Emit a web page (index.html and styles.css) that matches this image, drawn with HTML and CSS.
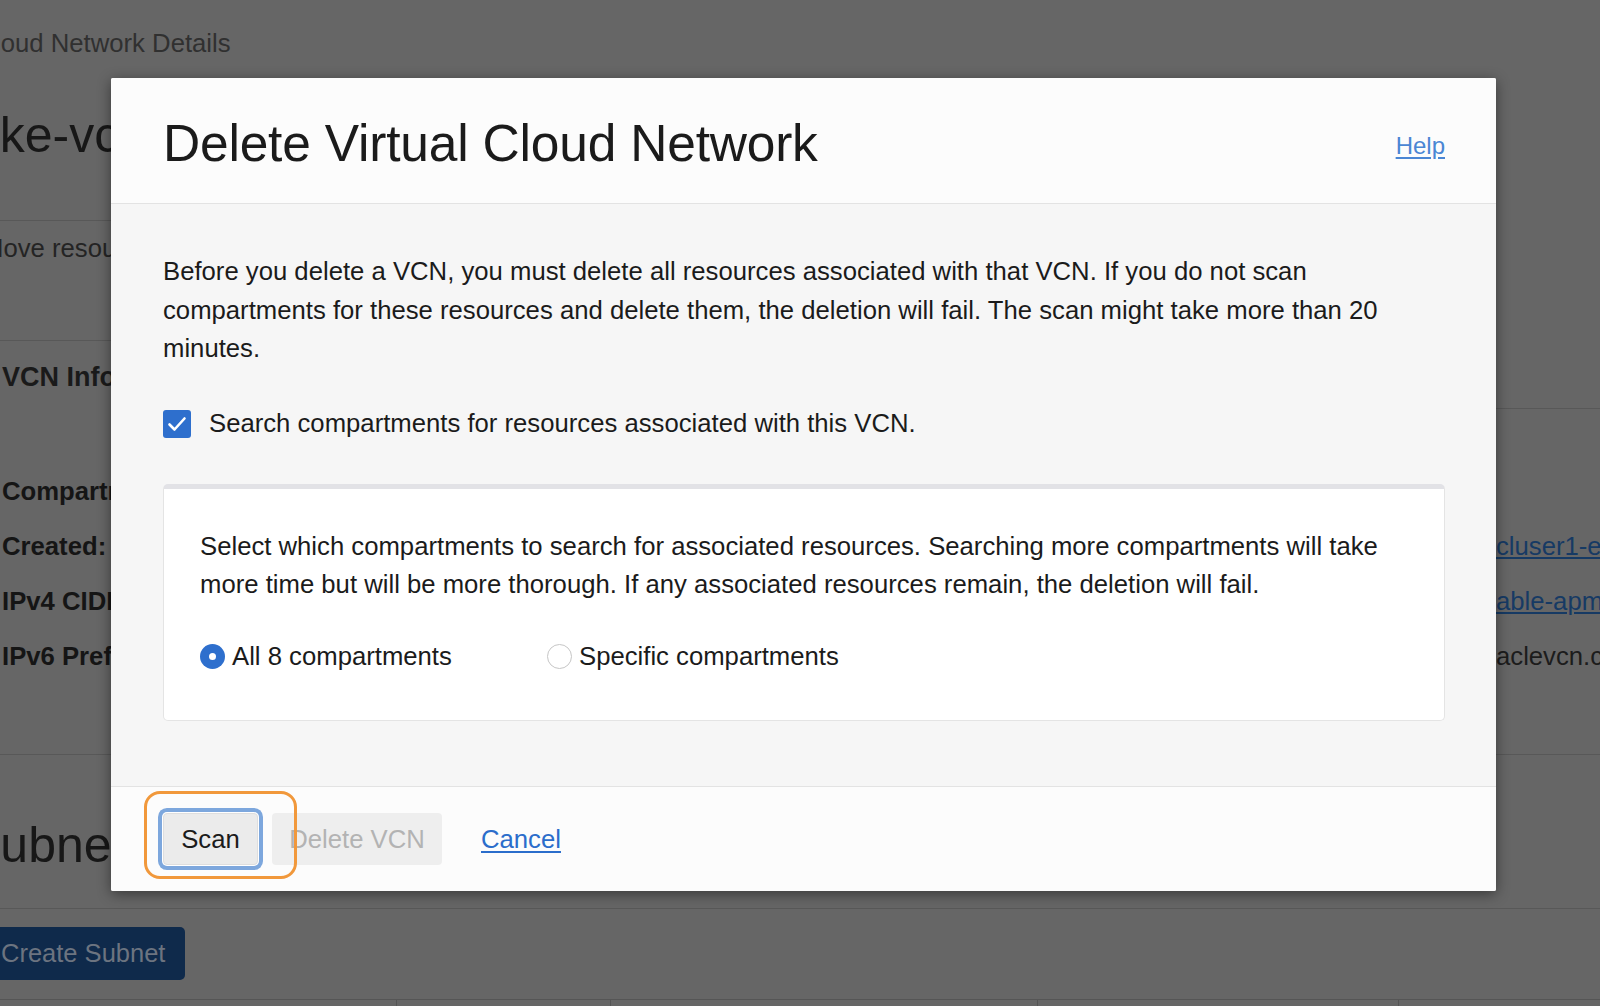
FILE: index.html
```html
<!DOCTYPE html>
<html lang="en">
<head>
<meta charset="utf-8">
<title>Delete Virtual Cloud Network</title>
<link rel="stylesheet" href="styles.css">
</head>
<body>
<div class="page">
  <div class="head-block">
    <div class="crumb">Virtual Cloud Network Details</div>
    <h1 class="vcn-title">oke-vcn-quick-cluser1</h1>
  </div>
  <div class="actions"><span class="action">Move resources</span></div>
  <section class="info">
    <div class="info-left">
      <h2 class="info-title">VCN Information</h2>
      <div class="rows">
        <div class="row"><span class="label">Compartment:</span></div>
        <div class="row"><span class="label">Created:</span></div>
        <div class="row"><span class="label">IPv4 CIDR Blocks:</span></div>
        <div class="row"><span class="label">IPv6 Prefixes:</span></div>
      </div>
    </div>
    <div class="info-right">
      <div class="row"></div>
      <div class="row"><a class="bg-link">cluser1-e6a8c1f2</a></div>
      <div class="row"><a class="bg-link">able-apm-vcn</a></div>
      <div class="row"><span class="bg-text">aclevcn.com</span></div>
    </div>
  </section>
  <section class="subnets">
    <div class="subnets-head"><h2 class="big-title">Subnets</h2></div>
    <div class="toolbar"><span class="create-btn">Create Subnet</span></div>
    <div class="table-head">
      <div class="th"></div><div class="th"></div><div class="th"></div><div class="th"></div><div class="th"></div>
    </div>
  </section>
</div>

<div class="modal" role="dialog" aria-labelledby="dlg-title">
  <header class="modal-header">
    <h2 id="dlg-title" class="modal-title">Delete Virtual Cloud Network</h2>
    <a class="help-link" href="#">Help</a>
  </header>
  <div class="modal-body">
    <p class="intro">Before you delete a VCN, you must delete all resources associated with that VCN. If you do not scan compartments for these resources and delete them, the deletion will fail. The scan might take more than 20 minutes.</p>
    <label class="check-row">
      <span class="checkbox"><svg width="28" height="28" viewBox="0 0 28 28"><polyline points="6.5,14.5 11.5,19.5 21.5,8.5" fill="none" stroke="#fff" stroke-width="2.6" stroke-linecap="round" stroke-linejoin="round"/></svg></span>
      <span>Search compartments for resources associated with this VCN.</span>
    </label>
    <div class="scope-box">
      <p class="scope-text">Select which compartments to search for associated resources. Searching more compartments will take more time but will be more thorough. If any associated resources remain, the deletion will fail.</p>
      <div class="radio-row">
        <label class="radio-option"><span class="radio checked"></span><span>All 8 compartments</span></label>
        <label class="radio-option"><span class="radio"></span><span>Specific compartments</span></label>
      </div>
    </div>
  </div>
  <footer class="modal-footer">
    <button class="btn btn-scan">Scan</button>
    <button class="btn btn-disabled" disabled>Delete VCN</button>
    <a class="cancel-link" href="#">Cancel</a>
  </footer>
</div>
<div class="highlight"></div>
</body>
</html>
```

FILE: styles.css
```css
html, body {
  margin: 0;
  padding: 0;
}
body {
  width: 1600px;
  height: 1006px;
  overflow: hidden;
  background: #666666;
  font-family: "Liberation Sans", Arial, sans-serif;
  position: relative;
}

/* ---------- dimmed background page ---------- */
.page {
  padding-top: 28px;
}
.head-block {
  width: 1300px;
  border-bottom: 1px solid #585858;
  padding-bottom: 55px;
}
.crumb {
  font-size: 25.7px;
  line-height: 30px;
  margin-left: -103px;
  color: #303030;
  white-space: nowrap;
}
.vcn-title {
  font-size: 50px;
  line-height: 60px;
  font-weight: normal;
  margin: 47px 0 0 -28px;
  color: #171717;
  white-space: nowrap;
}
.actions {
  width: 1300px;
  display: flex;
  padding: 12px 0 77px;
  border-bottom: 1px solid #585858;
}
.action {
  margin-left: -18px;
  font-size: 25.7px;
  line-height: 30px;
  color: #242424;
}
.info {
  display: grid;
  grid-template-columns: 1496px 1fr;
  border-bottom: 1px solid #585858;
  padding-bottom: 70.5px;
}
.info-left {
  padding-left: 2px;
}
.info-title {
  margin: 21px 0 0;
  font-size: 27px;
  line-height: 30px;
  font-weight: bold;
  color: #1a1a1a;
  white-space: nowrap;
}
.rows {
  margin-top: 71.5px;
}
.row {
  height: 55px;
  display: flex;
  align-items: center;
  font-size: 25.7px;
  white-space: nowrap;
}
.label {
  font-weight: bold;
  color: #151515;
}
.info-right {
  margin-top: 67px;
  border-top: 1px solid #585858;
  padding-top: 54.5px;
  overflow: hidden;
}
.bg-link {
  color: #163a64;
  text-decoration: underline;
}
.bg-text {
  color: #1c1c1c;
}
.subnets-head {
  border-bottom: 1px solid #585858;
  padding: 60px 0 33px;
}
.big-title {
  margin: 0 0 0 -33px;
  font-size: 50px;
  line-height: 60px;
  font-weight: normal;
  color: #171717;
}
.toolbar {
  padding: 18px 0 19px;
}
.create-btn {
  display: inline-flex;
  align-items: center;
  height: 53px;
  margin-left: -19px;
  padding: 0 20px;
  background: #0f2a4b;
  color: #6c7480;
  font-size: 25.5px;
  border-radius: 5px;
}
.table-head {
  display: grid;
  grid-template-columns: 396px 214px 427px 361px 1fr;
  border-top: 1px solid #555555;
  height: 10px;
}
.th + .th {
  border-left: 1px solid #555555;
}

/* ---------- modal ---------- */
.modal {
  position: absolute;
  left: 111px;
  top: 78px;
  width: 1385px;
  height: 813px;
  display: flex;
  flex-direction: column;
  background: #f6f6f6;
  border-radius: 2px;
  box-shadow: 0 3px 14px rgba(0, 0, 0, 0.45);
  color: #1b1b1b;
}
.modal-header {
  height: 126px;
  box-sizing: border-box;
  padding: 5px 51px 0 52px;
  flex: none;
  display: flex;
  align-items: center;
  justify-content: space-between;
  background: #fcfcfc;
  border-bottom: 1px solid #e3e3e3;
  border-radius: 2px 2px 0 0;
}
.modal-title {
  margin: 0;
  font-size: 51.5px;
  font-weight: normal;
  color: #1b1b1b;
  letter-spacing: -0.2px;
}
.help-link {
  margin-top: 5px;
  font-size: 24px;
  color: #4a86d4;
  text-decoration: underline;
  text-underline-offset: 3px;
}
.modal-body {
  flex: 1;
  padding: 48px 51px 0 52px;
  font-size: 25.7px;
}
.intro {
  margin: 0;
  line-height: 38.5px;
}
.check-row {
  display: flex;
  align-items: center;
  height: 38px;
  margin-top: 37px;
}
.checkbox {
  width: 28px;
  height: 28px;
  border-radius: 3px;
  background: #2e6fcd;
  margin-right: 18px;
  display: flex;
}
.scope-box {
  margin-top: 41px;
  background: #ffffff;
  border: 1px solid #e4e4e4;
  border-top: 5px solid #e2e2e6;
  border-radius: 5px;
  padding: 38px 36px 44px;
}
.scope-text {
  margin: 0;
  line-height: 38px;
}
.radio-row {
  display: flex;
  margin-top: 35px;
  height: 38px;
}
.radio-option {
  display: flex;
  align-items: center;
  gap: 7px;
  min-width: 347px;
}
.radio {
  width: 25px;
  height: 25px;
  border-radius: 50%;
  box-sizing: border-box;
  border: 1px solid #c6c6c6;
  background: #ffffff;
  position: relative;
  flex: none;
}
.radio.checked {
  border: none;
  background: #2e6fcd;
}
.radio.checked::after {
  content: "";
  position: absolute;
  left: 9px;
  top: 9px;
  width: 7px;
  height: 7px;
  border-radius: 50%;
  background: #ffffff;
}
.modal-footer {
  height: 104px;
  flex: none;
  display: flex;
  align-items: center;
  padding-left: 52px;
  background: #fcfcfc;
  border-top: 1px solid #e3e3e3;
  border-radius: 0 0 2px 2px;
}
.btn {
  height: 52px;
  font-family: inherit;
  font-size: 25.7px;
  border-radius: 4px;
  padding: 0;
  white-space: nowrap;
}
.btn-scan {
  width: 95px;
  background: #ebebeb;
  color: #1b1b1b;
  border: 1px solid #dedede;
  box-shadow: 0 0 0 1px #ffffff, 0 0 0 5px #7da7dd;
}
.btn-disabled {
  width: 170px;
  margin-left: 14px;
  background: #eeeeee;
  color: #b3b3b3;
  border: none;
}
.cancel-link {
  margin-left: 39px;
  font-size: 25.7px;
  color: #2b6dcb;
  text-decoration: underline;
  text-underline-offset: 3px;
}

/* annotation highlight around Scan */
.highlight {
  position: absolute;
  left: 144px;
  top: 791px;
  width: 147px;
  height: 82px;
  border: 3px solid #f1983b;
  border-radius: 16px;
}
```
